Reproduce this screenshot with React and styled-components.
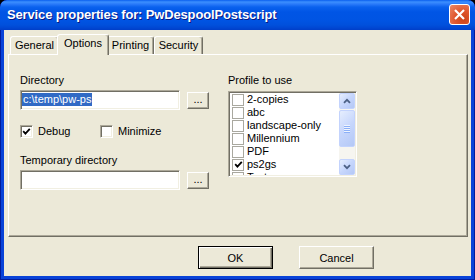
import React from 'react';
import styled, { createGlobalStyle } from 'styled-components';

const GlobalStyle = createGlobalStyle`
  html, body {
    margin: 0;
    padding: 0;
    background: #000;
  }
  body {
    font-family: "Liberation Sans", Arial, sans-serif;
    font-size: 11px;
    color: #000;
  }
  * {
    box-sizing: border-box;
  }
`;

const tabs = [
  { label: 'General', w: 49 },
  { label: 'Options', w: 48, active: true },
  { label: 'Printing', w: 47 },
  { label: 'Security', w: 49 },
];

const profiles = [
  { name: '2-copies' },
  { name: 'abc' },
  { name: 'landscape-only' },
  { name: 'Millennium' },
  { name: 'PDF' },
  { name: 'ps2gs', checked: true },
  { name: 'Test' },
];

const Tick = () => (
  <svg width="9" height="9" viewBox="0 0 9 9">
    <polyline points="1.2,4.2 3.4,6.6 7.8,1.8" fill="none" stroke="#000" strokeWidth="1.8" />
  </svg>
);

const Chevron = ({ up }) => (
  <svg width="8" height="6" viewBox="0 0 8 6">
    <polyline
      points={up ? '1,4.8 4,1.8 7,4.8' : '1,1.2 4,4.2 7,1.2'}
      fill="none"
      stroke="#4D6185"
      strokeWidth="1.8"
    />
  </svg>
);

const App = () => {
  return (
    <>
      <GlobalStyle />
      <Window>
        <TitleBar>
          <Title>Service properties for: PwDespoolPostscript</Title>
          <CloseButton>
            <svg width="19" height="19" viewBox="0 0 19 19">
              <line x1="5" y1="5" x2="14" y2="14" stroke="#fff" strokeWidth="2.2" />
              <line x1="14" y1="5" x2="5" y2="14" stroke="#fff" strokeWidth="2.2" />
            </svg>
          </CloseButton>
        </TitleBar>
        <Client>
          <TabStrip>
            {tabs.map((t) => (
              <Tab key={t.label} $w={t.w} $active={t.active}>
                {t.label}
              </Tab>
            ))}
          </TabStrip>
          <Panel>
            <Columns>
              <Column>
                <Label>Directory</Label>
                <FieldRow>
                  <TextInput>
                    <Selection>{'c:\\temp\\pw-ps'}</Selection>
                  </TextInput>
                  <BrowseButton>...</BrowseButton>
                </FieldRow>
                <CheckRow>
                  <CheckItem $w={80}>
                    <CheckBox>
                      <Tick />
                    </CheckBox>
                    <CheckText>Debug</CheckText>
                  </CheckItem>
                  <CheckItem>
                    <CheckBox />
                    <CheckText>Minimize</CheckText>
                  </CheckItem>
                </CheckRow>
                <Label $top={16}>Temporary directory</Label>
                <FieldRow>
                  <TextInput />
                  <BrowseButton>...</BrowseButton>
                </FieldRow>
              </Column>
              <Column>
                <Label>Profile to use</Label>
                <ListBox>
                  <ListItems>
                    {profiles.map((p) => (
                      <ListItem key={p.name}>
                        <FlatBox>{p.checked && <Tick />}</FlatBox>
                        {p.name}
                      </ListItem>
                    ))}
                  </ListItems>
                  <ScrollBar>
                    <ScrollButton>
                      <Chevron up />
                    </ScrollButton>
                    <Track>
                      <Thumb>
                        <Grip />
                        <Grip />
                        <Grip />
                        <Grip />
                      </Thumb>
                    </Track>
                    <ScrollButton>
                      <Chevron />
                    </ScrollButton>
                  </ScrollBar>
                </ListBox>
              </Column>
            </Columns>
          </Panel>
          <ButtonRow>
            <DialogButton $default>OK</DialogButton>
            <DialogButton>Cancel</DialogButton>
          </ButtonRow>
        </Client>
      </Window>
    </>
  );
};

const Window = styled.div`
  width: 475px;
  height: 280px;
  display: flex;
  flex-direction: column;
  background: #0842d8;
  border-radius: 7px 7px 0 0;
  overflow: hidden;
  box-shadow: inset 0 0 0 1px #001b9c;
`;

const TitleBar = styled.div`
  height: 30px;
  flex-shrink: 0;
  display: flex;
  align-items: center;
  justify-content: space-between;
  padding: 0 5px 0 7px;
  background: linear-gradient(
    to bottom,
    #0a5fef 0px,
    #3c8ffe 2px,
    #2b7bfa 4px,
    #0a61ee 7px,
    #0055e5 12px,
    #0054e3 20px,
    #0050dc 25px,
    #0046d2 28px,
    #003ec8 30px
  );
  border-radius: 7px 7px 0 0;
`;

const Title = styled.div`
  color: #fff;
  font-size: 13px;
  font-weight: bold;
  letter-spacing: -0.15px;
  text-shadow: 1px 1px #0a1883;
  padding-bottom: 1px;
`;

const CloseButton = styled.div`
  width: 21px;
  height: 21px;
  margin-bottom: 1px;
  display: flex;
  align-items: center;
  justify-content: center;
  border: 1px solid #fff;
  border-radius: 3px;
  background: radial-gradient(circle at 70% 75%, #cc4419 0%, #e0572e 45%, #ec8a68 100%);
`;

const Client = styled.div`
  flex: 1;
  margin: 0 4px 4px;
  padding: 0 3px 7px 4px;
  background: #ece9d8;
  display: flex;
  flex-direction: column;
`;

const TabStrip = styled.div`
  height: 24px;
  display: flex;
  align-items: flex-end;
  padding-left: 2px;
`;

const Tab = styled.div`
  position: relative;
  width: ${(p) => (p.$active ? p.$w + 4 : p.$w)}px;
  height: ${(p) => (p.$active ? 21 : 18)}px;
  margin: ${(p) => (p.$active ? '0 -2px -1px' : '0')};
  z-index: ${(p) => (p.$active ? 1 : 0)};
  padding-top: 2px;
  text-align: center;
  line-height: 13px;
  background: #ece9d8;
  border-top: 1px solid #fff;
  border-left: 1px solid #fff;
  border-right: 1px solid #716f64;
  border-radius: 3px 3px 0 0;
  box-shadow: inset -1px 0 #aca899;
`;

const Panel = styled.div`
  height: 183px;
  padding: 19px 0 0 11px;
  border: 1px solid;
  border-color: #fff #716f64 #716f64 #fff;
  box-shadow: inset -1px -1px #aca899;
`;

const Columns = styled.div`
  display: grid;
  grid-template-columns: 190px 129px;
  column-gap: 18px;
  align-items: start;
`;

const Column = styled.div`
  display: flex;
  flex-direction: column;
`;

const Label = styled.div`
  line-height: 13px;
  height: 13px;
  margin-top: ${(p) => p.$top || 0}px;
`;

const FieldRow = styled.div`
  display: flex;
  align-items: center;
  gap: 7px;
  margin-top: 3px;
`;

const sunken = `
  border: 1px solid;
  border-color: #aca899 #fff #fff #aca899;
  box-shadow: inset 1px 1px #716f64, inset -1px -1px #f1efe2;
`;

const raised = `
  border: 1px solid;
  border-color: #fff #716f64 #716f64 #fff;
  box-shadow: inset -1px -1px #aca899;
  background: #ece9d8;
`;

const TextInput = styled.div`
  width: 160px;
  height: 20px;
  padding: 2px 0 0 1px;
  background: #fff;
  ${sunken}
`;

const Selection = styled.span`
  display: inline-block;
  line-height: 13px;
  padding: 0 1px;
  background: #316ac5;
  color: #fff;
`;

const BrowseButton = styled.div`
  width: 22px;
  height: 17px;
  text-align: center;
  line-height: 13px;
  ${raised}
`;

const CheckRow = styled.div`
  display: flex;
  margin-top: 15px;
  height: 13px;
`;

const CheckItem = styled.div`
  display: flex;
  align-items: center;
  width: ${(p) => (p.$w ? `${p.$w}px` : 'auto')};
`;

const CheckBox = styled.div`
  width: 13px;
  height: 13px;
  display: flex;
  align-items: center;
  justify-content: center;
  background: #fff;
  ${sunken}
`;

const CheckText = styled.span`
  margin-left: 5px;
  line-height: 13px;
`;

const ListBox = styled.div`
  width: 129px;
  height: 86px;
  margin-top: 4px;
  display: flex;
  background: #fff;
  ${sunken}
  padding: 1px;
`;

const ListItems = styled.div`
  flex: 1;
  overflow: hidden;
  padding-left: 2px;
`;

const ListItem = styled.div`
  display: flex;
  align-items: center;
  height: 13px;
  line-height: 13px;
`;

const FlatBox = styled.div`
  width: 12px;
  height: 12px;
  margin-right: 3px;
  display: flex;
  align-items: center;
  justify-content: center;
  border: 1px solid #a9a89f;
  background: #fff;
`;

const ScrollBar = styled.div`
  width: 16px;
  display: flex;
  flex-direction: column;
  background: #f6f5f0;
`;

const blueButton = `
  border: 1px solid #c3d3fd;
  border-radius: 2px;
  background: linear-gradient(135deg, #e6eefe 0%, #c6d6fc 50%, #b4c8f6 100%);
`;

const ScrollButton = styled.div`
  height: 16px;
  display: flex;
  align-items: center;
  justify-content: center;
  ${blueButton}
`;

const Track = styled.div`
  flex: 1;
  padding-top: 1px;
`;

const Thumb = styled.div`
  height: 37px;
  display: flex;
  flex-direction: column;
  align-items: center;
  justify-content: center;
  gap: 1px;
  ${blueButton}
`;

const Grip = styled.div`
  width: 6px;
  height: 1px;
  background: #eef4fe;
  box-shadow: 0 1px #8cb0f8;
`;

const ButtonRow = styled.div`
  display: flex;
  gap: 26px;
  margin-top: 9px;
  padding-left: 190px;
`;

const DialogButton = styled.div`
  width: 75px;
  height: 23px;
  display: flex;
  align-items: center;
  justify-content: center;
  background: #ece9d8;
  ${(p) =>
    p.$default
      ? `
    border: 1px solid #000;
    box-shadow: inset 1px 1px #fff, inset -1px -1px #716f64, inset -2px -2px #aca899;
  `
      : `
    border: 1px solid;
    border-color: #fff #716f64 #716f64 #fff;
    box-shadow: inset -1px -1px #aca899;
  `}
`;

export default App;
